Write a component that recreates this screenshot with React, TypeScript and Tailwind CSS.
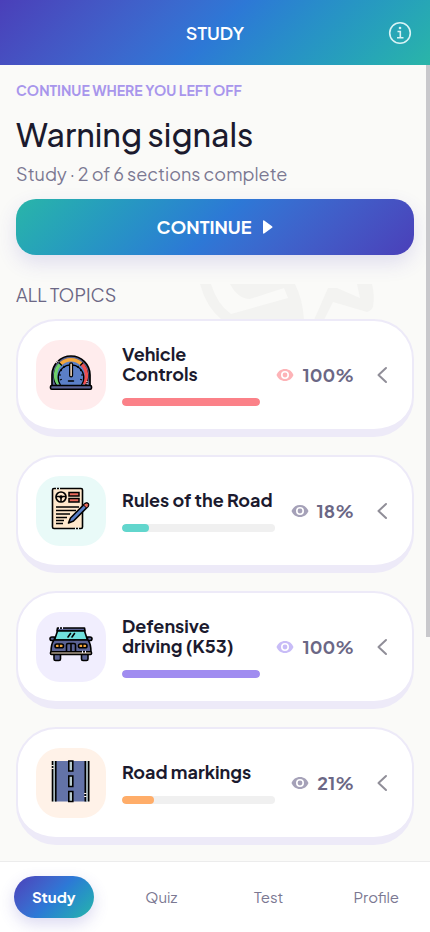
import { useState } from "react";
import type { ReactNode } from "react";

type Topic = {
  id: string;
  title: string;
  progress: number;
  tile: string;
  bar: string;
  eye: string;
  icon: ReactNode;
};

function GaugeIcon() {
  return (
    <svg viewBox="0 -2 44 44" className="size-11" fill="none" aria-hidden="true">
      <path d="M3 33V22a19 19 0 0 1 38 0v11z" fill="#5b6394" stroke="#000" strokeWidth="1.7" />
      <path d="M8 33a17 17 0 1 1 28 0z" fill="#5b7fc7" stroke="#000" strokeWidth="1.2" />
      <path d="M9.500 31a15 15 0 0 1 2-20" stroke="#6fd06a" strokeWidth="3.400" />
      <path d="M34.500 31a15 15 0 0 0-2-20" stroke="#f04f4f" strokeWidth="3.400" />
      <path d="M11.500 11a15 15 0 0 1 21 0" stroke="#f5a83c" strokeWidth="3.400" />
      <path d="M11.500 32a12.800 12.800 0 1 1 21 0" stroke="#000" strokeWidth="1.300" />
      <path d="M9.800 9.500l3 3M34.200 9.500l-3 3" stroke="#000" strokeWidth="1.200" />
      <path d="M10 22h2M11 17l1.800.8M14.500 13l1.200 1.300M11 27l1.800-.8M34 22h-2M33 17l-1.800.8M29.500 13l-1.200 1.300M33 27l-1.800-.8" stroke="#000" strokeWidth="1.200" />
      <rect x="20.700" y="9.800" width="2.800" height="14" rx="1.400" fill="#ffe5ca" stroke="#000" strokeWidth="1.300" />
      <path d="M19.500 28h5" stroke="#000" strokeWidth="1.500" strokeLinecap="round" />
      <rect x="1.500" y="32.500" width="41" height="3.800" rx="1.200" fill="#5b6394" stroke="#000" strokeWidth="1.600" />
      <path d="M7 10l2.500-2.500" stroke="#ffeced" strokeWidth="1.600" strokeDasharray="1 1" />
      <path d="M38 28v3" stroke="#ffeced" strokeWidth="1.200" strokeDasharray="1 1" />
    </svg>
  );
}

function TestPaperIcon() {
  return (
    <svg viewBox="0 0 44 44" className="size-11" fill="none" stroke="#000" aria-hidden="true">
      <rect x="3.500" y="1.500" width="30" height="40" rx="1.500" fill="#ffe8cc" strokeWidth="1.600" />
      <circle cx="12" cy="10" r="5" strokeWidth="1.700" />
      <circle cx="12" cy="10" r="1.200" fill="#000" />
      <path d="M7 9.500h10M12 11v4" strokeWidth="1.500" />
      <path d="M20 5.500h10V9H20zM20 11.500h10V15H20z" fill="#e9695a" strokeWidth="1.500" />
      <path d="M7 20h23M7 23.500h20M7 27h14M7 30.500h11M7 33.500h8M7 36.500h7" strokeWidth="1.500" />
      <path d="M19.500 36l2-5L36 16.500q2-1 3 0t0 3L24.500 34z" fill="#5b7fc7" strokeWidth="1.600" strokeLinejoin="round" />
      <path d="M34.500 18L36 16.500q2-1 3 0t0 3L37.500 21z" fill="#e9695a" strokeWidth="1" />
      <path d="M7 1.500h1m2 0h1M26 41.500h1m2 0h1" stroke="#e9faf8" strokeWidth="2.400" />
    </svg>
  );
}

function CarIcon() {
  return (
    <svg viewBox="0 -2 44 44" className="size-11" fill="none" stroke="#000" strokeWidth="1.600" strokeLinejoin="round" aria-hidden="true">
      <path d="M5 29h6.500v5q0 1.500-1.500 1.500H6.500Q5 35.500 5 34zM32.500 29H39v5q0 1.500-1.500 1.500H34q-1.500 0-1.500-1.500z" fill="#5b6394" />
      <path d="M8.500 3h27l.5 3H8z" fill="#5b6394" />
      <path d="M8.500 6h27l3 9h-33z" fill="#6fe0dc" />
      <path d="M5.500 12H3q-2 0-2 1.700t2 1.800h2.500zM38.500 12H41q2 0 2 1.700t-2 1.800h-2.500z" fill="#5b6394" />
      <path d="M5 15h34q3 4 3 12H2q0-8 3-12z" fill="#5b6394" />
      <rect x="6" y="19" width="8.500" height="3.800" rx="1.900" fill="#f5a83c" />
      <rect x="29.500" y="19" width="8.500" height="3.800" rx="1.900" fill="#f5a83c" />
      <path d="M10.200 19v4M33.800 19v4" strokeWidth="1.300" />
      <path d="M17.500 27v-7q0-1.500 1.500-1.500h6q1.500 0 1.500 1.500v7M22 18.500V27" />
      <path d="M19 12l2.500-3.500M23 12l2.500-3.500" strokeLinecap="round" />
      <rect x="1.500" y="26.800" width="41" height="2.600" rx="1" fill="#ffe8cc" />
      <path d="M10 3h1m2 0h1M33 26.800h1m2 0h1" stroke="#f1eefe" strokeWidth="2.200" />
    </svg>
  );
}

function RoadIcon() {
  return (
    <svg viewBox="0 0 44 44" className="size-11" fill="none" stroke="#000" strokeWidth="1.600" aria-hidden="true">
      <path d="M6 2h32v40.500H6z" fill="#6373a8" stroke="none" />
      <path d="M3.500 2h3v40.500h-3zM36.500 2h3v40.500h-3z" fill="#a9bbc0" stroke="none" />
      <path d="M3.500 2v40.500M6.800 2v40.500M36.300 2v40.500M39.700 2v40.500" />
      <path d="M19.800 2h4v10h-4zM19.800 17h4v10.500h-4zM19.800 32.500h4v10h-4z" fill="#b9cccf" />
      <path d="M3.500 6v1m0 2v1M36.300 34v1m0 2v1" stroke="#fff2e8" strokeWidth="2.400" />
    </svg>
  );
}

function EyeIcon({ className }: { className: string }) {
  return (
    <svg viewBox="0 0 18 12" className={`h-3 w-[18px] shrink-0 ${className}`} aria-hidden="true">
      <path
        fill="currentColor"
        fillRule="evenodd"
        d="M9 0C5 0 2 2.300.5 6 2 9.700 5 12 9 12s7-2.300 8.500-6C16 2.300 13 0 9 0zm0 10a4 4 0 1 1 0-8 4 4 0 0 1 0 8zm0-1.600a2.400 2.400 0 1 0 0-4.800 2.400 2.400 0 0 0 0 4.800z"
      />
    </svg>
  );
}

const topics: Topic[] = [
  { id: "controls", title: "Vehicle Controls", progress: 100, tile: "bg-[#ffeced]", bar: "bg-[#fb8188]", eye: "text-[#fdb3b7]", icon: <GaugeIcon /> },
  { id: "rules", title: "Rules of the Road", progress: 18, tile: "bg-[#e9faf8]", bar: "bg-[#62d6cd]", eye: "text-[#a5a1b8]", icon: <TestPaperIcon /> },
  { id: "defensive", title: "Defensive driving (K53)", progress: 100, tile: "bg-[#f1eefe]", bar: "bg-[#a08cf0]", eye: "text-[#c8bcf7]", icon: <CarIcon /> },
  { id: "markings", title: "Road markings", progress: 21, tile: "bg-[#fff2e8]", bar: "bg-[#ffad69]", eye: "text-[#a5a1b8]", icon: <RoadIcon /> },
];

const tabs = ["Study", "Quiz", "Test", "Profile"];

function TopicCard({ topic }: { topic: Topic }) {
  return (
    <button className="flex w-full items-center rounded-[40px] border-2 border-b-8 border-[#edeaf8] bg-white py-[19px] pr-6 pl-[18px] text-left">
      <span className={`flex size-[70px] shrink-0 items-center justify-center rounded-3xl pb-1 ${topic.tile}`}>
        {topic.icon}
      </span>
      <span className="ml-4 min-w-0 flex-1">
        <span className="block text-lg leading-5 font-bold text-[#1b1a2e]">{topic.title}</span>
        <span className="mt-3.5 block h-2 overflow-hidden rounded-full bg-[#f0f0f0]">
          <span className={`block h-full rounded-full ${topic.bar}`} style={{ width: `${topic.progress}%` }} />
        </span>
      </span>
      <span className="ml-4 flex items-center gap-2">
        <EyeIcon className={topic.eye} />
        <span className="text-lg leading-6 font-bold text-[#6b6785]">{topic.progress}%</span>
      </span>
      <svg viewBox="0 0 12 18" className="ml-[22px] h-[18px] w-3 shrink-0" fill="none" aria-hidden="true">
        <path d="M10 2 2.500 9l7.500 7" stroke="#908e98" strokeWidth="2" strokeLinecap="round" strokeLinejoin="round" />
      </svg>
    </button>
  );
}

export default function App() {
  const [active, setActive] = useState("Study");

  return (
    <div className="flex h-screen flex-col overflow-hidden bg-[#fafaf8] font-['Plus_Jakarta_Sans','Inter',sans-serif]">
      <header className="grid h-[65px] shrink-0 grid-cols-[1fr_auto_1fr] items-center bg-linear-135 from-[#4a3fb9] via-[#2d78d6] to-[#2ab5a8] px-[18px] text-white">
        <h1 className="col-start-2 text-lg font-semibold">STUDY</h1>
        <button aria-label="Information" className="justify-self-end">
          <svg viewBox="0 0 24 24" className="size-6" fill="none" stroke="#d8f3f5" strokeWidth="1.600" aria-hidden="true">
            <circle cx="12" cy="12" r="10.300" />
            <path d="M9.500 10.500h2.800v6M9 16.800h6.500" />
            <circle cx="12" cy="7" r="1.300" fill="#d8f3f5" stroke="none" />
          </svg>
        </button>
      </header>

      <main className="relative min-h-0 flex-1 overflow-hidden px-4 pt-[15px]">
        <p className="text-sm leading-5 font-bold text-[#a896ec]">CONTINUE WHERE YOU LEFT OFF</p>
        <h2 className="mt-3 text-[32px] leading-[44px] font-medium text-[#1b1a2e]">Warning signals</h2>
        <p className="mt-1.5 text-lg leading-6 text-[#7b7892]">Study · 2 of 6 sections complete</p>
        <button className="mt-[13px] flex h-14 w-full items-center justify-center gap-3 rounded-[20px] bg-linear-135 from-[#2ab5a8] via-[#2d78d6] to-[#4a3fb9] text-lg font-bold text-white shadow-[0_8px_20px_rgba(74,63,185,0.15)]">
          CONTINUE
          <svg viewBox="0 0 10 14" className="h-3.5 w-2.5" fill="currentColor" aria-hidden="true">
            <path d="M0 1.500Q0-.5 1.500.7L9 6.200q1 .8 0 1.600L1.500 13.300Q0 14.500 0 12.500z" />
          </svg>
        </button>

        <section className="relative mt-7">
          <svg viewBox="0 0 180 40" className="absolute top-0 left-[184px] h-10 w-[180px]" fill="#f3f3f1" aria-hidden="true">
            <path d="M0 1h11q6 20 20 30l18-5 39-11-4-10-34 11Q38 16 30 1h65q8 16 9 36H22Q6 24 0 1z" />
            <path d="M114 37 128 5h9l23 10-3-14h15q3 12 1 23-2 4-6 5l-34-10-9 18z" />
          </svg>
          <h3 className="relative text-lg leading-6 text-[#6b6785]">ALL TOPICS</h3>
          <div className="relative mt-3 flex flex-col gap-[18px]">
            {topics.map((topic) => (
              <TopicCard key={topic.id} topic={topic} />
            ))}
          </div>
        </section>

        <div className="absolute top-0 right-0 h-[572px] w-1 bg-[#c8c8cc]" />
      </main>

      <nav className="grid h-[71px] shrink-0 grid-cols-4 items-center justify-items-center border-t border-[#ececec] bg-white">
        {tabs.map((tab) => (
          <button
            key={tab}
            onClick={() => setActive(tab)}
            className={
              tab === active
                ? "h-[42px] w-20 rounded-full bg-linear-135 from-[#4a3fb9] via-[#2d78d6] to-[#2ab5a8] text-[15px] font-bold text-white shadow-[0_6px_16px_rgba(74,63,185,0.2)]"
                : "px-2 py-2 text-[15px] text-[#7b7892]"
            }
          >
            {tab}
          </button>
        ))}
      </nav>
    </div>
  );
}
